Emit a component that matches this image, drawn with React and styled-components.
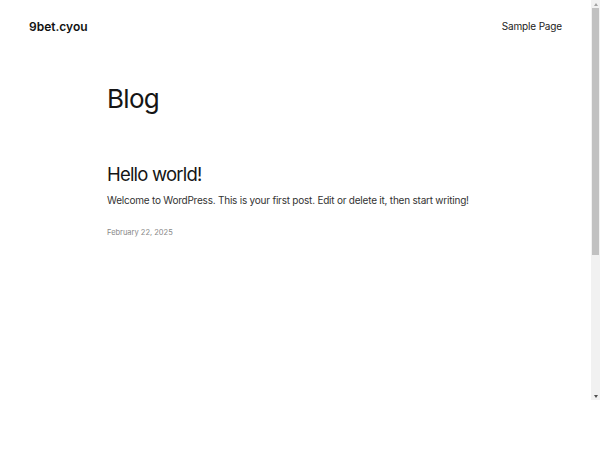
import React from "react";
import styled, { createGlobalStyle } from "styled-components";

const GlobalStyle = createGlobalStyle`
  html, body {
    margin: 0;
    padding: 0;
    background: #ffffff;
  }
  body {
    font-family: Inter, "Noto Sans", sans-serif;
    color: #111111;
  }
`;

const Window = styled.div`
  width: 600px;
  height: 400px;
  display: flex;
  overflow: hidden;
  background: #ffffff;
`;

const Page = styled.div`
  width: 591px;
  display: flex;
  flex-direction: column;
`;

const ScrollBar = styled.div`
  width: 9px;
  height: 400px;
  display: flex;
  flex-direction: column;
  align-items: center;
  background: #f1f1f1;
`;

const Arrow = styled.div`
  height: 8px;
  width: 9px;
  display: flex;
  align-items: center;
  justify-content: center;

  &::after {
    content: "";
    border-left: 2.5px solid transparent;
    border-right: 2.5px solid transparent;
    ${p =>
      p.$down
        ? "border-top: 3px solid #505050;"
        : "border-bottom: 3px solid #a3a3a3;"}
  }
`;

const Thumb = styled.div`
  width: 7px;
  height: 247px;
  background: #c1c1c1;
`;

const Track = styled.div`
  flex: 1;
`;

const Header = styled.header`
  display: flex;
  align-items: center;
  justify-content: space-between;
  padding: 12px 29px 0 29px;
  height: 28px;
`;

const SiteTitle = styled.a`
  font-size: 12px;
  font-weight: 600;
  color: #111111;
  text-decoration: none;
`;

const NavLink = styled.a`
  font-size: 10px;
  color: #222222;
  text-decoration: none;
  letter-spacing: -0.15px;
`;

const Main = styled.main`
  width: 377px;
  margin: 0 auto;
  padding-top: 43px;
`;

const PageTitle = styled.h1`
  margin: 0;
  font-size: 26px;
  font-weight: 400;
  line-height: 1.2;
  letter-spacing: -0.7px;
  color: #151515;
`;

const Post = styled.article`
  margin-top: 49px;
`;

const PostTitle = styled.h2`
  margin: 0;
  font-size: 18.5px;
  font-weight: 400;
  line-height: 1.2;
  letter-spacing: -0.8px;
  color: #151515;
`;

const Excerpt = styled.p`
  margin: 8px 0 0;
  font-size: 10px;
  line-height: 1.5;
  color: #333333;
  letter-spacing: -0.22px;
  white-space: nowrap;
`;

const PostDate = styled.time`
  display: block;
  margin-top: 20px;
  font-size: 7.5px;
  color: #888888;
`;

export default function App() {
  return (
    <>
      <GlobalStyle />
      <Window>
        <Page>
          <Header>
            <SiteTitle href="#">9bet.cyou</SiteTitle>
            <NavLink href="#">Sample Page</NavLink>
          </Header>
          <Main>
            <PageTitle>Blog</PageTitle>
            <Post>
              <PostTitle>Hello world!</PostTitle>
              <Excerpt>
                Welcome to WordPress. This is your first post. Edit or delete it, then start writing!
              </Excerpt>
              <PostDate dateTime="2025-02-22">February 22, 2025</PostDate>
            </Post>
          </Main>
        </Page>
        <ScrollBar>
          <Arrow />
          <Thumb />
          <Track />
          <Arrow $down />
        </ScrollBar>
      </Window>
    </>
  );
}
